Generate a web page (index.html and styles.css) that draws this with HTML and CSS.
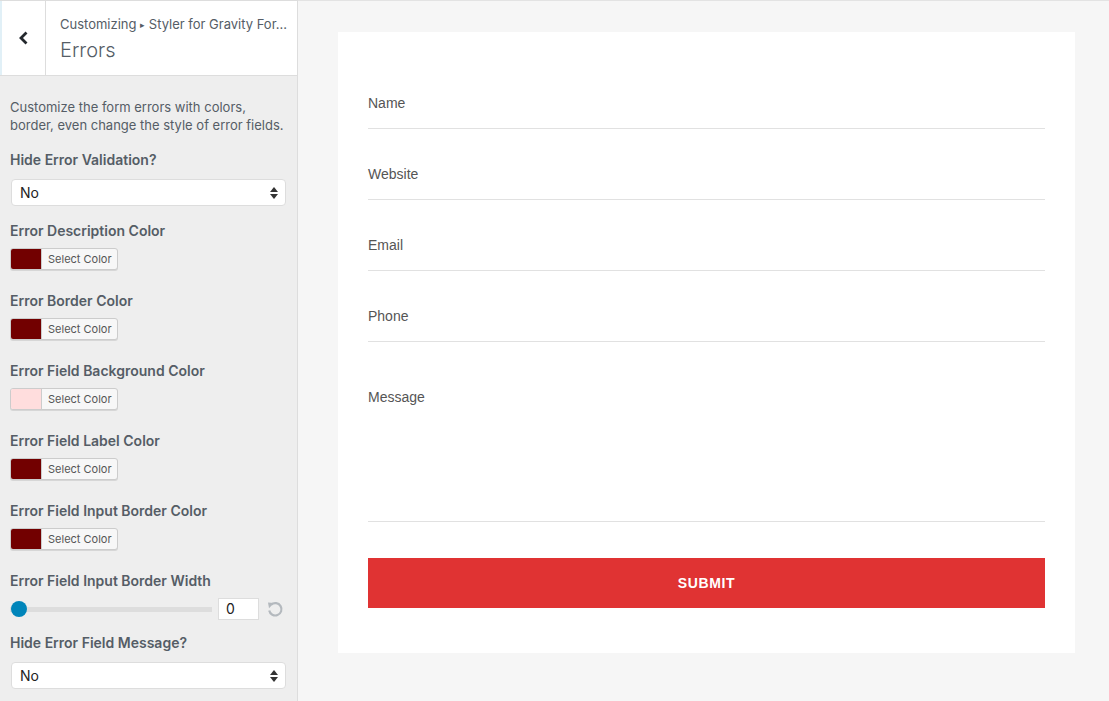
FILE: index.html
```html
<!DOCTYPE html>
<html lang="en">
<head>
  <meta charset="UTF-8">
  <title>Customizing - Errors</title>
  <link rel="stylesheet" href="styles.css">
</head>
<body>
  <div class="wrap">
    <!-- Customizer sidebar -->
    <div class="sidebar">
      <div class="panel-head">
        <div class="back">
          <svg width="16" height="16" viewBox="0 0 16 16"><polyline points="10.5,2.5 5,8 10.5,13.5" fill="none" stroke="#23282d" stroke-width="2.8"/></svg>
        </div>
        <div class="head-text">
          <div class="crumb">Customizing <span class="tri">&#9656;</span> Styler for Gravity For...</div>
          <div class="head-title">Errors</div>
        </div>
      </div>

      <div class="controls">
        <p class="desc">Customize the form errors with colors, border, even change the style of error fields.</p>

        <div class="ctl ctl-select">
          <div class="ctl-label">Hide Error Validation?</div>
          <div class="select">
            <span>No</span>
            <svg width="8" height="12" viewBox="0 0 8 12"><polygon points="4,0 8,5 0,5" fill="#333"/><polygon points="0,7 8,7 4,12" fill="#333"/></svg>
          </div>
        </div>

        <div class="ctl ctl-color">
          <div class="ctl-label">Error Description Color</div>
          <div class="color-btn"><span class="swatch dark"></span><span class="pick">Select Color</span></div>
        </div>

        <div class="ctl ctl-color">
          <div class="ctl-label">Error Border Color</div>
          <div class="color-btn"><span class="swatch dark"></span><span class="pick">Select Color</span></div>
        </div>

        <div class="ctl ctl-color">
          <div class="ctl-label">Error Field Background Color</div>
          <div class="color-btn"><span class="swatch light"></span><span class="pick">Select Color</span></div>
        </div>

        <div class="ctl ctl-color">
          <div class="ctl-label">Error Field Label Color</div>
          <div class="color-btn"><span class="swatch dark"></span><span class="pick">Select Color</span></div>
        </div>

        <div class="ctl ctl-color">
          <div class="ctl-label">Error Field Input Border Color</div>
          <div class="color-btn"><span class="swatch dark"></span><span class="pick">Select Color</span></div>
        </div>

        <div class="ctl ctl-range">
          <div class="ctl-label">Error Field Input Border Width</div>
          <div class="range-row">
            <div class="track"><span class="thumb"></span></div>
            <div class="num">0</div>
            <svg class="reset" width="18" height="18" viewBox="0 0 18 18">
              <path d="M5.2 4.6 A6.2 6.2 0 1 1 3.2 10.5" fill="none" stroke="#b4b9be" stroke-width="2.2"/>
              <polygon points="2,2.5 8,3 3,8.2" fill="#b4b9be"/>
            </svg>
          </div>
        </div>

        <div class="ctl ctl-select">
          <div class="ctl-label">Hide Error Field Message?</div>
          <div class="select">
            <span>No</span>
            <svg width="8" height="12" viewBox="0 0 8 12"><polygon points="4,0 8,5 0,5" fill="#333"/><polygon points="0,7 8,7 4,12" fill="#333"/></svg>
          </div>
        </div>
      </div>
    </div>

    <!-- Preview -->
    <div class="preview">
      <div class="form-card">
        <div class="field">Name</div>
        <div class="field">Website</div>
        <div class="field">Email</div>
        <div class="field">Phone</div>
        <div class="field message">Message</div>
        <div class="submit">SUBMIT</div>
      </div>
    </div>
  </div>
</body>
</html>
```

FILE: styles.css
```css
* {
  box-sizing: border-box;
}

body {
  margin: 0;
  font-family: Inter, "Noto Sans", sans-serif;
  color: #555d66;
}

.wrap {
  display: flex;
  height: 701px;
  overflow: hidden;
}

.sidebar {
  width: 298px;
  flex: none;
  background: #eeeeee;
  border-right: 1px solid #dddddd;
}

.panel-head {
  display: flex;
  height: 76px;
  background: #fff;
  border-top: 1px solid #dddddd;
  border-bottom: 1px solid #dddddd;
}

.back {
  width: 46px;
  border-left: 2px solid #e1f0f7;
  border-right: 1px solid #dddddd;
  display: flex;
  align-items: center;
  justify-content: center;
}

.head-text {
  padding: 13px 0 0 14px;
}

.crumb {
  font-size: 13px;
  line-height: 20px;
}

.crumb .tri {
  font-size: 9px;
  vertical-align: 1px;
}

.head-title {
  font-size: 20px;
  font-weight: 300;
  line-height: 26px;
  margin-top: 2px;
}

.controls {
  padding: 0 10px;
}

.desc {
  margin: 22px 0 16px;
  font-size: 13px;
  line-height: 18px;
}

.ctl-label {
  font-size: 14px;
  font-weight: 600;
  line-height: 20px;
}

.ctl-select {
  margin-bottom: 15px;
}

.ctl-select .ctl-label {
  margin-bottom: 9px;
}

.select {
  display: flex;
  align-items: center;
  justify-content: space-between;
  height: 27px;
  margin: 0 1px;
  padding: 0 7px 0 8px;
  background: #fff;
  border: 1px solid #dddddd;
  border-radius: 4px;
  font-size: 14px;
  color: #222;
}

.ctl-color {
  margin-bottom: 21px;
}

.ctl-color .ctl-label {
  margin-bottom: 7px;
}

.color-btn {
  display: flex;
  width: 108px;
  height: 22px;
  border: 1px solid #cccccc;
  border-radius: 3px;
  background: #f7f7f7;
  overflow: hidden;
  box-shadow: 0 1px 0 #d6d6d6;
}

.swatch {
  width: 31px;
  flex: none;
  border-right: 1px solid #cccccc;
}

.swatch.dark {
  background: #720000;
}

.swatch.light {
  background: #ffdddd;
}

.pick {
  font-size: 11px;
  line-height: 20px;
  padding: 0 6px;
  color: #555;
  white-space: nowrap;
}

.ctl-range {
  margin-bottom: 13px;
}

.ctl-range .ctl-label {
  margin-bottom: 7px;
}

.range-row {
  display: flex;
  align-items: center;
  height: 22px;
}

.track {
  position: relative;
  width: 202px;
  height: 5px;
  background: #dddddd;
  margin-right: 6px;
}

.thumb {
  position: absolute;
  left: 1px;
  top: -6px;
  width: 16px;
  height: 16px;
  border-radius: 50%;
  background: #0085ba;
}

.num {
  width: 41px;
  height: 22px;
  background: #fff;
  border: 1px solid #dddddd;
  font-size: 14px;
  line-height: 20px;
  padding-left: 7px;
  color: #222;
}

.reset {
  margin-left: 7px;
}

.preview {
  flex: 1;
  background: #f6f6f6;
  border-top: 1px solid #e3e3e3;
  padding: 31px 0 0 40px;
}

.form-card {
  width: 737px;
  background: #fff;
  padding: 46px 30px 45px;
  font-family: "Liberation Sans", Arial, sans-serif;
}

.field {
  height: 51px;
  display: flex;
  align-items: center;
  padding-bottom: 1px;
  border-bottom: 1px solid #e1e1e1;
  margin-bottom: 20px;
  font-size: 14px;
  color: #555;
}

.field.message {
  height: 160px;
  align-items: flex-start;
  padding-top: 27px;
  margin-bottom: 36px;
}

.submit {
  height: 50px;
  background: #e03333;
  color: #fff;
  font-size: 14px;
  font-weight: bold;
  letter-spacing: 0.6px;
  display: flex;
  align-items: center;
  justify-content: center;
}
```
